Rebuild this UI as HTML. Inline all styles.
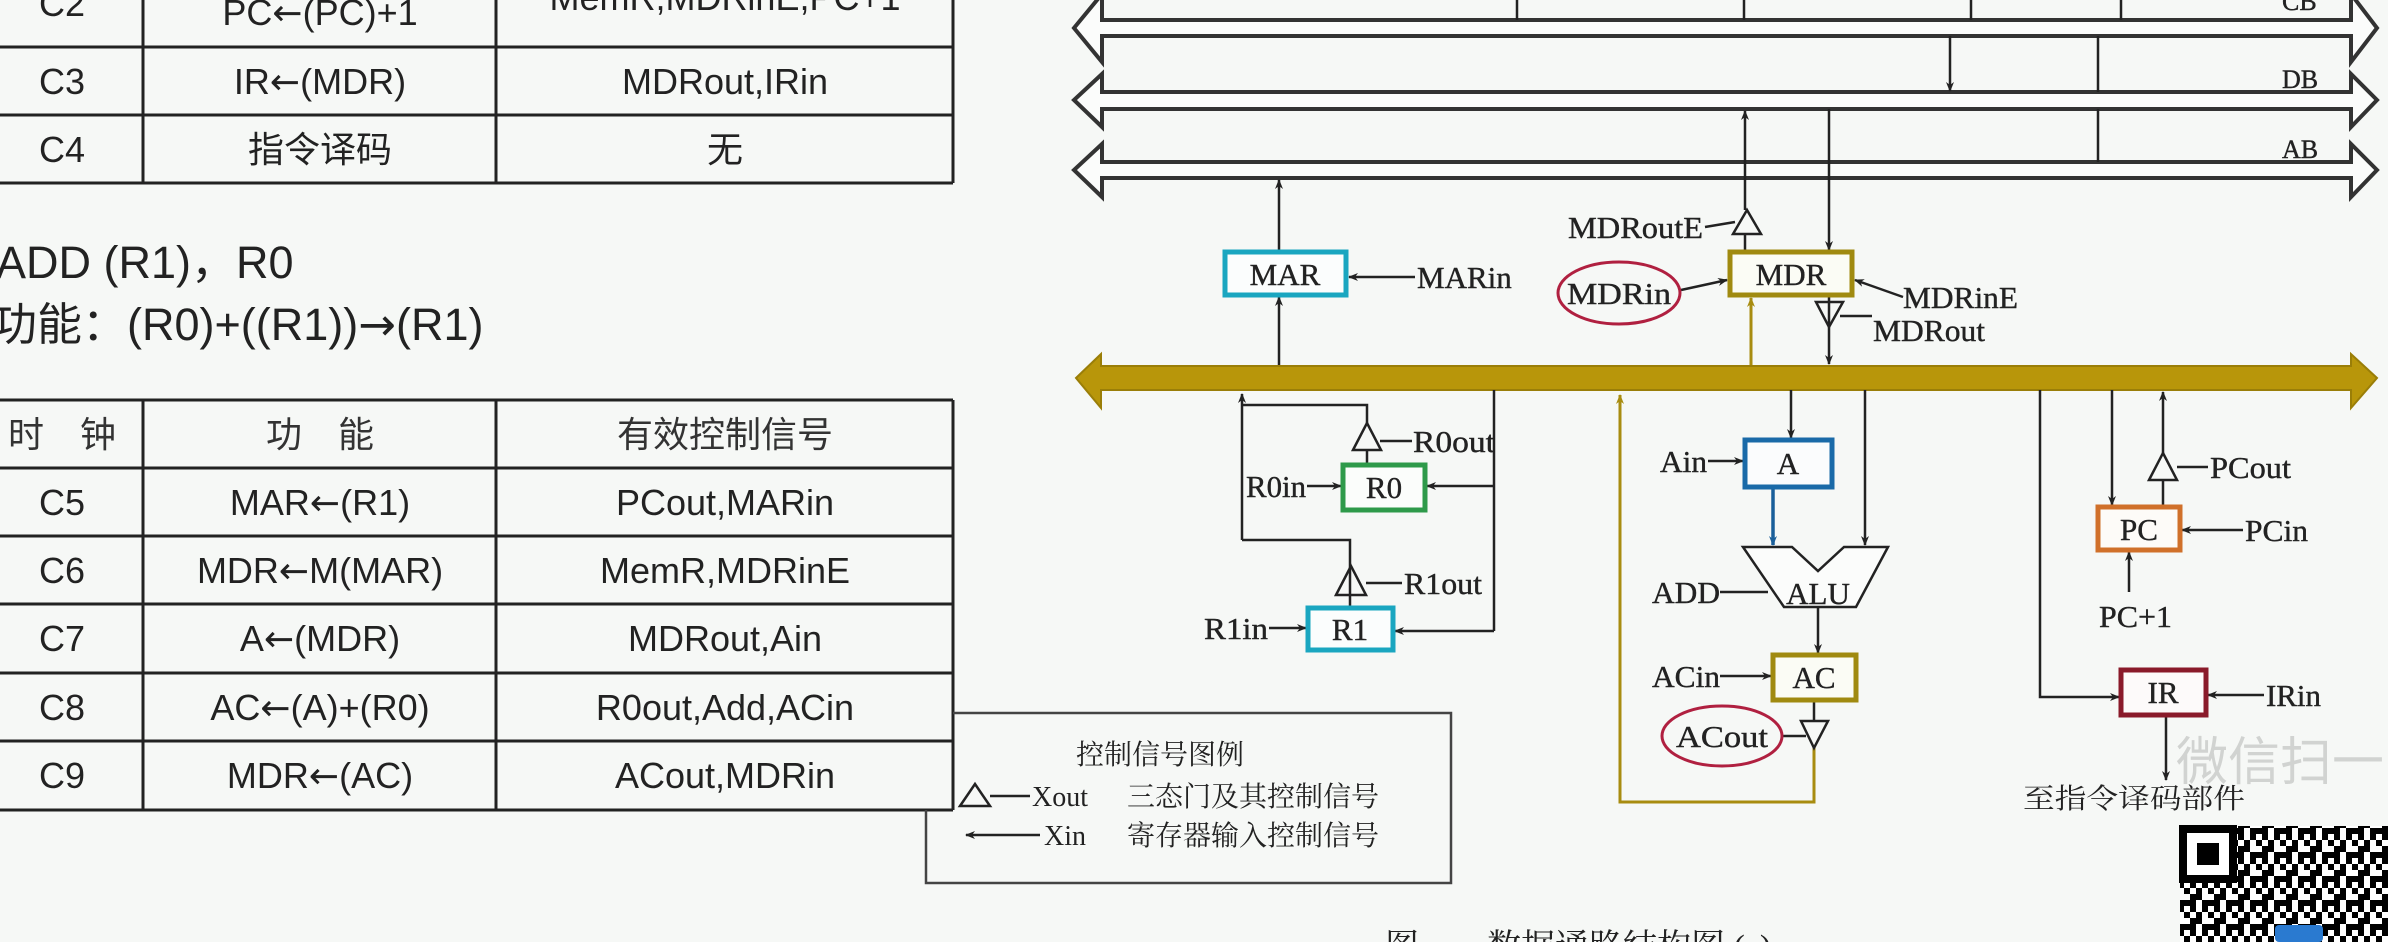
<!DOCTYPE html>
<html><head><meta charset="utf-8"><style>
html,body{margin:0;padding:0;background:#f6f8f6;}
svg{display:block}
.t{font-family:"Liberation Sans","Noto Sans CJK SC",sans-serif;font-size:36px;fill:#222;text-anchor:middle}
.ar{font-family:"DejaVu Sans",sans-serif;}
.s{font-family:"Liberation Serif","Noto Serif CJK SC",serif;font-size:31px;fill:#222;stroke:#222;stroke-width:0.4}
.c{font-family:"Liberation Serif","Noto Serif CJK SC",serif;font-size:28px;fill:#222}
</style></head><body>
<svg width="2388" height="942" viewBox="0 0 2388 942" xmlns="http://www.w3.org/2000/svg">
<defs>
<marker id="a" markerWidth="10" markerHeight="8" refX="9" refY="4" orient="auto" markerUnits="userSpaceOnUse"><path d="M0,0 L10,4 L0,8 L3,4z" fill="#222"/></marker>
<marker id="g" markerWidth="10" markerHeight="8" refX="9" refY="4" orient="auto" markerUnits="userSpaceOnUse"><path d="M0,0 L10,4 L0,8 L3,4z" fill="#a88c10"/></marker>
<marker id="b" markerWidth="10" markerHeight="8" refX="9" refY="4" orient="auto" markerUnits="userSpaceOnUse"><path d="M0,0 L10,4 L0,8 L3,4z" fill="#1a5f9a"/></marker>
<pattern id="qr" width="24" height="24" patternUnits="userSpaceOnUse">
<rect width="24" height="24" fill="#fff"/>
<rect x="0" y="0" width="6" height="6" fill="#000"/><rect x="12" y="0" width="6" height="12" fill="#000"/>
<rect x="6" y="6" width="6" height="6" fill="#000"/><rect x="18" y="12" width="6" height="6" fill="#000"/>
<rect x="0" y="12" width="12" height="6" fill="#000"/><rect x="6" y="18" width="6" height="6" fill="#000"/>
<rect x="18" y="18" width="6" height="6" fill="#000"/>
</pattern>
</defs>
<rect width="2388" height="942" fill="#f6f8f6"/>

<!-- Table 1 -->
<g stroke="#222" stroke-width="3" fill="none">
<line x1="0" y1="47" x2="953" y2="47"/><line x1="0" y1="115" x2="953" y2="115"/><line x1="0" y1="183" x2="953" y2="183"/>
<line x1="143" y1="0" x2="143" y2="183"/><line x1="496" y1="0" x2="496" y2="183"/><line x1="953" y1="0" x2="953" y2="183"/>
</g>
<text class="t" x="62" y="16">C2</text><text class="t" x="320" y="25">PC<tspan class="ar">←</tspan>(PC)+1</text><text class="t" x="725" y="10">MemR,MDRinE,PC+1</text>
<text class="t" x="62" y="94">C3</text><text class="t" x="320" y="94">IR<tspan class="ar">←</tspan>(MDR)</text><text class="t" x="725" y="94">MDRout,IRin</text>
<text class="t" x="62" y="162">C4</text><text class="t" x="320" y="162">指令译码</text><text class="t" x="725" y="162">无</text>

<text x="-4" y="278" style="font-family:'Liberation Sans','Noto Sans CJK SC',sans-serif;font-size:45px;fill:#222">ADD (R1)，R0</text>
<text x="-8" y="340" style="font-family:'Liberation Sans','Noto Sans CJK SC',sans-serif;font-size:45px;fill:#222">功能：(R0)+((R1))<tspan class="ar">→</tspan>(R1)</text>

<!-- Table 2 -->
<g stroke="#222" stroke-width="3" fill="none">
<line x1="0" y1="400" x2="953" y2="400"/><line x1="0" y1="468" x2="953" y2="468"/><line x1="0" y1="536" x2="953" y2="536"/>
<line x1="0" y1="604" x2="953" y2="604"/><line x1="0" y1="673" x2="953" y2="673"/><line x1="0" y1="741" x2="953" y2="741"/>
<line x1="0" y1="810" x2="953" y2="810"/>
<line x1="143" y1="400" x2="143" y2="810"/><line x1="496" y1="400" x2="496" y2="810"/><line x1="953" y1="400" x2="953" y2="810"/>
</g>
<text class="t" x="62" y="447" style="fill:#333">时　钟</text><text class="t" x="320" y="447" style="fill:#333">功　能</text><text class="t" x="725" y="447" style="fill:#333">有效控制信号</text>
<text class="t" x="62" y="515">C5</text><text class="t" x="320" y="515">MAR<tspan class="ar">←</tspan>(R1)</text><text class="t" x="725" y="515">PCout,MARin</text>
<text class="t" x="62" y="583">C6</text><text class="t" x="320" y="583">MDR<tspan class="ar">←</tspan>M(MAR)</text><text class="t" x="725" y="583">MemR,MDRinE</text>
<text class="t" x="62" y="651">C7</text><text class="t" x="320" y="651">A<tspan class="ar">←</tspan>(MDR)</text><text class="t" x="725" y="651">MDRout,Ain</text>
<text class="t" x="62" y="720">C8</text><text class="t" x="320" y="720">AC<tspan class="ar">←</tspan>(A)+(R0)</text><text class="t" x="725" y="720">R0out,Add,ACin</text>
<text class="t" x="62" y="788">C9</text><text class="t" x="320" y="788">MDR<tspan class="ar">←</tspan>(AC)</text><text class="t" x="725" y="788">ACout,MDRin</text>

<!-- Legend -->
<path d="M953,713 H1451 V883 H926 V810" stroke="#444" stroke-width="2.5" fill="none"/>
<text class="c" x="1076" y="764">控制信号图例</text>
<path d="M960,806 L975,784 L990,806 Z M990,796 H1030" stroke="#222" stroke-width="2.5" fill="none"/>
<text class="c" x="1032" y="806">Xout</text>
<text class="c" x="1127" y="806">三态门及其控制信号</text>
<line x1="1040" y1="835" x2="966" y2="835" stroke="#222" stroke-width="2.5" marker-end="url(#a)"/>
<text class="c" x="1044" y="845">Xin</text>
<text class="c" x="1127" y="845">寄存器输入控制信号</text>

<!-- Buses CB DB AB -->
<g stroke="#333" stroke-width="4" fill="#fbfcfb" stroke-linejoin="miter">
<path d="M1102,-6 L1074,28 L1102,62 V36 H2351 V62 L2377,28 L2351,-6 V20 H1102 Z"/>
<path d="M1102,74 L1074,100 L1102,127 V109 H2351 V127 L2377,100 L2351,74 V92 H1102 Z"/>
<path d="M1102,144 L1074,170 L1102,197 V178 H2351 V197 L2377,170 L2351,144 V162 H1102 Z"/>
</g>
<text class="s" x="2282" y="10" style="font-size:26px">CB</text>
<text class="s" x="2282" y="88" style="font-size:26px">DB</text>
<text class="s" x="2282" y="158" style="font-size:26px">AB</text>
<g stroke="#222" stroke-width="2.5" fill="none">
<line x1="1517" y1="0" x2="1517" y2="20"/><line x1="1744" y1="0" x2="1744" y2="20"/><line x1="1971" y1="0" x2="1971" y2="20"/><line x1="2121" y1="0" x2="2121" y2="20"/>
<line x1="1950" y1="36" x2="1950" y2="91" marker-end="url(#a)"/>
<line x1="2098" y1="36" x2="2098" y2="92"/><line x1="2098" y1="109" x2="2098" y2="162"/>
<line x1="1279" y1="252" x2="1279" y2="180" marker-end="url(#a)"/>
<line x1="1279" y1="366" x2="1279" y2="297" marker-end="url(#a)"/>
<line x1="1415" y1="277" x2="1349" y2="277" marker-end="url(#a)"/>
<line x1="1745" y1="210" x2="1745" y2="111" marker-end="url(#a)"/>
<line x1="1745" y1="252" x2="1745" y2="234"/>
<path d="M1733,234 L1747,210 L1761,234 Z"/>
<line x1="1705" y1="227" x2="1735" y2="222"/>
<line x1="1829" y1="109" x2="1829" y2="250" marker-end="url(#a)"/>
<line x1="1681" y1="290" x2="1727" y2="280" marker-end="url(#a)"/>
<line x1="1903" y1="297" x2="1855" y2="280" marker-end="url(#a)"/>
<line x1="1829" y1="295" x2="1829" y2="364" marker-end="url(#a)"/>
<path d="M1816,302 L1843,302 L1829,327 Z"/>
<line x1="1840" y1="316" x2="1872" y2="316"/>
</g>
<rect x="1225" y="252" width="121" height="43" fill="#fbfdfd" stroke="#1aa6c0" stroke-width="5"/>
<text class="s" x="1285" y="285" text-anchor="middle">MAR</text>
<text class="s" x="1417" y="288">MARin</text>
<rect x="1730" y="252" width="122" height="43" fill="#fbfcf5" stroke="#a08a10" stroke-width="5"/>
<text class="s" x="1791" y="285" text-anchor="middle">MDR</text>
<text class="s" x="1568" y="238" textLength="135" lengthAdjust="spacingAndGlyphs">MDRoutE</text>
<ellipse cx="1619" cy="293" rx="61" ry="31" fill="none" stroke="#b02040" stroke-width="3"/>
<text class="s" x="1619" y="304" text-anchor="middle" textLength="104" lengthAdjust="spacingAndGlyphs">MDRin</text>
<text class="s" x="1903" y="308" textLength="115" lengthAdjust="spacingAndGlyphs">MDRinE</text>
<text class="s" x="1873" y="341" textLength="112" lengthAdjust="spacingAndGlyphs">MDRout</text>
<line x1="1751" y1="366" x2="1751" y2="298" stroke="#a88c10" stroke-width="3" marker-end="url(#g)"/>

<!-- Main bus -->
<path d="M1101,354 L1076,378 L1101,408 V390 H2351 V408 L2377,378 L2351,354 V366 H1101 Z" fill="#b8960a" stroke="#9a7e08" stroke-width="2"/>

<g stroke="#222" stroke-width="2.5" fill="none">
<line x1="1242" y1="540" x2="1242" y2="394" marker-end="url(#a)"/>
<path d="M1242,540 H1350 V595"/>
<path d="M1336,595 L1351,566 L1366,595 Z"/>
<line x1="1350" y1="595" x2="1350" y2="608"/>
<line x1="1366" y1="583" x2="1402" y2="583"/>
<path d="M1242,405 H1367 V423"/>
<path d="M1353,450 L1367,423 L1381,450 Z"/>
<line x1="1367" y1="450" x2="1367" y2="465"/>
<line x1="1380" y1="441" x2="1412" y2="441"/>
<path d="M1494,390 V631"/>
<line x1="1494" y1="486" x2="1427" y2="486" marker-end="url(#a)"/>
<line x1="1494" y1="631" x2="1395" y2="631" marker-end="url(#a)"/>
<line x1="1307" y1="486" x2="1341" y2="486" marker-end="url(#a)"/>
<line x1="1269" y1="628" x2="1306" y2="628" marker-end="url(#a)"/>
</g>
<rect x="1343" y="465" width="82" height="45" fill="#fbfdfb" stroke="#2e9a4a" stroke-width="5"/>
<text class="s" x="1384" y="498" text-anchor="middle">R0</text>
<rect x="1308" y="608" width="85" height="42" fill="#fbfdfd" stroke="#1aa6c0" stroke-width="5"/>
<text class="s" x="1350" y="640" text-anchor="middle">R1</text>
<text class="s" x="1413" y="452" textLength="82" lengthAdjust="spacingAndGlyphs">R0out</text>
<text class="s" x="1246" y="497" textLength="60" lengthAdjust="spacingAndGlyphs">R0in</text>
<text class="s" x="1404" y="594" textLength="78" lengthAdjust="spacingAndGlyphs">R1out</text>
<text class="s" x="1204" y="639" textLength="64" lengthAdjust="spacingAndGlyphs">R1in</text>

<path d="M1620,395 V802 H1814 V745" stroke="#a88c10" stroke-width="3" fill="none"/>
<line x1="1620" y1="420" x2="1620" y2="395" stroke="#a88c10" stroke-width="3" marker-end="url(#g)"/>

<g stroke="#222" stroke-width="2.5" fill="none">
<line x1="1791" y1="390" x2="1791" y2="438" marker-end="url(#a)"/>
<line x1="1708" y1="461" x2="1743" y2="461" marker-end="url(#a)"/>
<line x1="1865" y1="390" x2="1865" y2="545" marker-end="url(#a)"/>
<path d="M1743,547 H1792 L1818,571 L1844,547 H1888 L1856,607 H1784 Z" fill="#fbfcfb"/>
<line x1="1720" y1="592" x2="1768" y2="592"/>
<line x1="1818" y1="607" x2="1818" y2="653" marker-end="url(#a)"/>
<line x1="1720" y1="676" x2="1771" y2="676" marker-end="url(#a)"/>
<line x1="1814" y1="700" x2="1814" y2="721"/>
<path d="M1801,721 L1828,721 L1814,748 Z"/>
<line x1="1782" y1="736" x2="1806" y2="736"/>
</g>
<line x1="1773" y1="487" x2="1773" y2="545" stroke="#1a5f9a" stroke-width="3.5" marker-end="url(#b)"/>
<rect x="1745" y="440" width="87" height="47" fill="#fbfcfd" stroke="#1a6aa8" stroke-width="5"/>
<text class="s" x="1788" y="474" text-anchor="middle">A</text>
<text class="s" x="1660" y="472" textLength="47" lengthAdjust="spacingAndGlyphs">Ain</text>
<text class="s" x="1818" y="604" text-anchor="middle">ALU</text>
<text class="s" x="1652" y="603" textLength="68" lengthAdjust="spacingAndGlyphs">ADD</text>
<rect x="1773" y="655" width="83" height="45" fill="#fbfcf5" stroke="#a08a10" stroke-width="5"/>
<text class="s" x="1814" y="688" text-anchor="middle">AC</text>
<text class="s" x="1652" y="687" textLength="68" lengthAdjust="spacingAndGlyphs">ACin</text>
<ellipse cx="1722" cy="736" rx="60" ry="30" fill="none" stroke="#b02040" stroke-width="3"/>
<text class="s" x="1722" y="747" text-anchor="middle" textLength="92" lengthAdjust="spacingAndGlyphs">ACout</text>

<g stroke="#222" stroke-width="2.5" fill="none">
<line x1="2112" y1="390" x2="2112" y2="505" marker-end="url(#a)"/>
<line x1="2163" y1="507" x2="2163" y2="480"/>
<path d="M2149,480 L2163,453 L2177,480 Z"/>
<line x1="2163" y1="453" x2="2163" y2="392" marker-end="url(#a)"/>
<line x1="2177" y1="467" x2="2208" y2="467"/>
<line x1="2243" y1="530" x2="2182" y2="530" marker-end="url(#a)"/>
<line x1="2129" y1="592" x2="2129" y2="552" marker-end="url(#a)"/>
<path d="M2040,390 V697 H2119" marker-end="url(#a)"/>
<line x1="2264" y1="695" x2="2208" y2="695" marker-end="url(#a)"/>
<line x1="2166" y1="715" x2="2166" y2="780" marker-end="url(#a)"/>
</g>
<rect x="2098" y="507" width="82" height="43" fill="#fdfbf8" stroke="#d0702a" stroke-width="5"/>
<text class="s" x="2139" y="540" text-anchor="middle">PC</text>
<text class="s" x="2210" y="478" textLength="81" lengthAdjust="spacingAndGlyphs">PCout</text>
<text class="s" x="2245" y="541" textLength="63" lengthAdjust="spacingAndGlyphs">PCin</text>
<text class="s" x="2099" y="627" textLength="73" lengthAdjust="spacingAndGlyphs">PC+1</text>
<rect x="2121" y="670" width="85" height="45" fill="#fdfafa" stroke="#8a1a2a" stroke-width="5"/>
<text class="s" x="2163" y="703" text-anchor="middle">IR</text>
<text class="s" x="2266" y="706" textLength="55" lengthAdjust="spacingAndGlyphs">IRin</text>
<text x="2176" y="780" style="font-family:'Noto Sans CJK SC',sans-serif;font-size:52px;fill:#c8cac8;opacity:.8">微信扫一</text>
<text class="c" x="2023" y="808" textLength="222" lengthAdjust="spacingAndGlyphs">至指令译码部件</text>

<rect x="2180" y="826" width="208" height="116" fill="url(#qr)"/>
<rect x="2183" y="829" width="50" height="50" fill="#fff" stroke="#000" stroke-width="8"/>
<rect x="2197" y="843" width="22" height="22" fill="#000"/>
<rect x="2275" y="925" width="48" height="17" rx="4" fill="#2a7ad0"/>

<text class="c" x="1385" y="958" style="font-size:34px">图　　数据通路结构图 (a)</text>
</svg>
</body></html>
